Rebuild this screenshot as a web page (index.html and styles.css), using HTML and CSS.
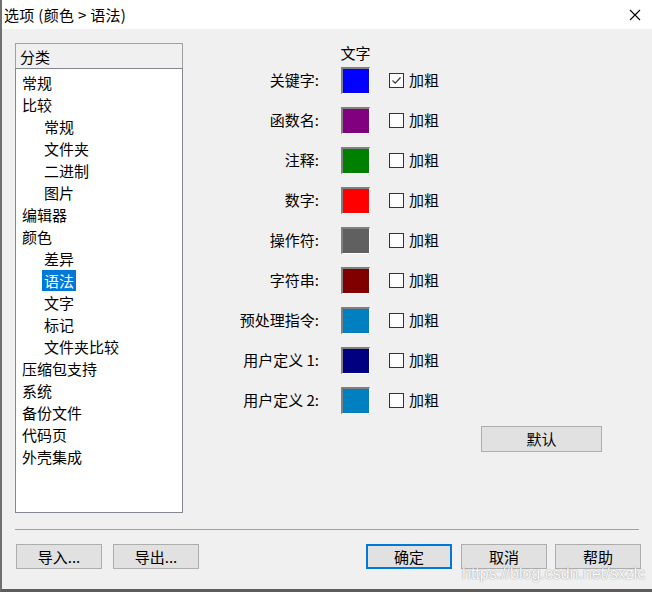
FILE: index.html
```html
<!DOCTYPE html>
<html>
<head>
<meta charset="utf-8">
<link rel="stylesheet" href="styles.css">
</head>
<body>
<div class="window">
  <div class="titlebar">
    <span class="title">选项 (颜色 &gt; 语法)</span>
    <svg class="close" width="12" height="12" viewBox="0 0 12 12"><path d="M1 1 L11 11 M11 1 L1 11" stroke="#000" stroke-width="1.1" fill="none"/></svg>
  </div>
  <div class="main">
    <div class="category">
      <div class="cat-head">分类</div>
      <ul class="cat-list">
        <li>常规</li>
        <li>比较</li>
        <li class="sub">常规</li>
        <li class="sub">文件夹</li>
        <li class="sub">二进制</li>
        <li class="sub">图片</li>
        <li>编辑器</li>
        <li>颜色</li>
        <li class="sub">差异</li>
        <li class="sub"><span class="selected">语法</span></li>
        <li class="sub">文字</li>
        <li class="sub">标记</li>
        <li class="sub">文件夹比较</li>
        <li>压缩包支持</li>
        <li>系统</li>
        <li>备份文件</li>
        <li>代码页</li>
        <li>外壳集成</li>
      </ul>
    </div>
    <div class="panel">
      <div class="col-head">文字</div>
      <div class="row"><span class="label">关键字:</span><span class="swatch c-blue"></span><span class="check"><span class="box"><svg width="13" height="13" viewBox="0 0 13 13"><path d="M2.5 6.5 L5.2 9.2 L10.5 3.5" stroke="#333" stroke-width="1.2" fill="none"/></svg></span>加粗</span></div>
      <div class="row"><span class="label">函数名:</span><span class="swatch c-purple"></span><span class="check"><span class="box"></span>加粗</span></div>
      <div class="row"><span class="label">注释:</span><span class="swatch c-green"></span><span class="check"><span class="box"></span>加粗</span></div>
      <div class="row"><span class="label">数字:</span><span class="swatch c-red"></span><span class="check"><span class="box"></span>加粗</span></div>
      <div class="row"><span class="label">操作符:</span><span class="swatch c-gray"></span><span class="check"><span class="box"></span>加粗</span></div>
      <div class="row"><span class="label">字符串:</span><span class="swatch c-maroon"></span><span class="check"><span class="box"></span>加粗</span></div>
      <div class="row"><span class="label">预处理指令:</span><span class="swatch c-sky"></span><span class="check"><span class="box"></span>加粗</span></div>
      <div class="row"><span class="label">用户定义 1:</span><span class="swatch c-navy"></span><span class="check"><span class="box"></span>加粗</span></div>
      <div class="row"><span class="label">用户定义 2:</span><span class="swatch c-sky"></span><span class="check"><span class="box"></span>加粗</span></div>
      <button class="btn btn-default">默认</button>
    </div>
  </div>
  <div class="separator"></div>
  <div class="footer">
    <div class="group">
      <button class="btn">导入...</button>
      <button class="btn">导出...</button>
    </div>
    <div class="group right">
      <button class="btn primary">确定</button>
      <button class="btn">取消</button>
      <button class="btn">帮助</button>
    </div>
  </div>
  <div class="watermark">https://blog.csdn.net/sxzlc</div>
</div>
</body>
</html>
```
FILE: styles.css
```css
* { box-sizing: border-box; }
html, body { margin: 0; padding: 0; }
body {
  width: 652px;
  height: 592px;
  overflow: hidden;
  font-family: "Noto Sans CJK SC", "Noto Sans", sans-serif;
  font-size: 15px;
  color: #000;
}
.window {
  position: relative;
  width: 652px;
  height: 592px;
  background: #f0f0f0;
  border-left: 2px solid #707070;
  border-bottom: 3px solid #5c5c5c;
  display: flex;
  flex-direction: column;
}
.titlebar {
  height: 29px;
  background: #fff;
  display: flex;
  align-items: center;
  justify-content: space-between;
  padding: 0 11px 0 2px;
  flex: none;
}
.title { line-height: 20px; letter-spacing: 0.3px; }
.close { display: block; margin-top: 1px; }
.main {
  display: flex;
  padding: 14px 0 0 13px;
  height: 484px;
  flex: none;
}
.category {
  width: 168px;
  display: flex;
  flex-direction: column;
}
.cat-head {
  height: 25px;
  border: 1px solid #a0a0a0;
  border-bottom: none;
  background: #f0f0f0;
  padding-left: 4px;
  line-height: 25px;
}
.cat-list {
  list-style: none;
  margin: 0;
  padding: 3px 0 0 6px;
  height: 445px;
  border: 1px solid #828790;
  background: #fff;
}
.cat-list li {
  height: 22px;
  line-height: 21px;
  white-space: nowrap;
}
.cat-list li.sub { padding-left: 22px; }
.selected {
  display: inline-block;
  background: #0078d7;
  color: #fff;
  line-height: 21px;
  padding: 0 2px;
  margin-left: -2px;
}
.panel {
  display: flex;
  flex-direction: column;
  align-items: flex-start;
}
.col-head {
  margin-left: 158px;
  width: 29px;
  height: 24px;
  line-height: 19px;
  display: flex;
  justify-content: center;
  white-space: nowrap;
}
.row {
  display: flex;
  align-items: center;
  height: 27px;
  margin-bottom: 13px;
}
.label {
  width: 136px;
  text-align: right;
  margin-right: 22px;
  white-space: nowrap;
  line-height: 20px;
  margin-top: -2px;
}
.swatch {
  width: 29px;
  height: 27px;
  border-top: 2px solid #808080;
  border-left: 2px solid #808080;
  border-right: 1px solid #fff;
  border-bottom: 1px solid #fff;
  margin-right: 19px;
}
.c-blue { background: #0000ff; }
.c-purple { background: #800080; }
.c-green { background: #008000; }
.c-red { background: #ff0000; }
.c-gray { background: #606060; }
.c-maroon { background: #800000; }
.c-sky { background: #0080c0; }
.c-navy { background: #000080; }
.check {
  display: flex;
  align-items: center;
  gap: 5px;
  line-height: 20px;
  margin-top: -1px;
}
.box {
  width: 15px;
  height: 15px;
  border: 1px solid #333;
  background: #fff;
  display: flex;
  align-items: center;
  justify-content: center;
}
.box svg { display: block; }
.btn {
  font-family: "Noto Sans CJK SC", "Noto Sans", sans-serif;
  font-size: 15px;
  color: #000;
  background: #e1e1e1;
  border: 1px solid #adadad;
  width: 86px;
  height: 25px;
  padding: 0;
  line-height: 20px;
  margin: 0;
}
.btn-default {
  width: 121px;
  height: 26px;
  margin: -1px 0 0 298px;
}
.btn.primary { border: 2px solid #0078d7; }
.separator {
  height: 1px;
  background: #a0a0a0;
  margin: 16px 13px 0 13px;
  flex: none;
}
.footer {
  display: flex;
  justify-content: space-between;
  padding: 14px 11px 0 14px;
}
.group { display: flex; gap: 11px; }
.group.right { gap: 9px; }
.group.right .btn:last-child { margin-left: -1px; }
.watermark {
  position: absolute;
  left: 460px;
  top: 564px;
  font-family: "Liberation Sans", Arial, sans-serif;
  font-size: 16px;
  line-height: 20px;
  color: #fafafa;
  text-shadow: 0 0 1px rgba(0, 0, 0, 0.35), 0 0 2px rgba(0, 0, 0, 0.2);
  white-space: nowrap;
}
```
